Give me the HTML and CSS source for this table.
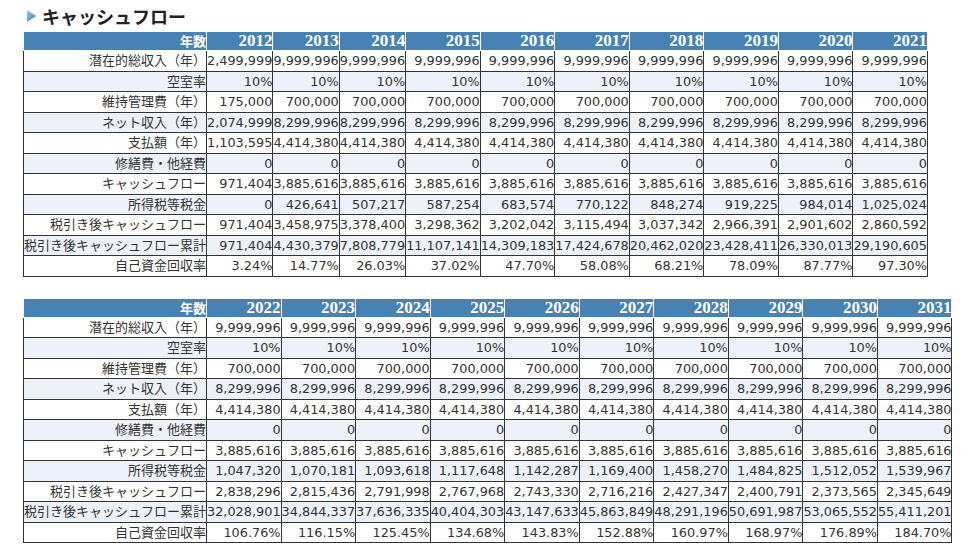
FILE: index.html
```html
<!DOCTYPE html>
<html lang="ja">
<head>
<meta charset="utf-8">
<title>キャッシュフロー</title>
<link rel="stylesheet" href="styles.css">
</head>
<body>
<div class="page">
  <h1 class="title">
    <svg class="title-icon" width="9" height="12" viewBox="0 0 9 12">
      <defs>
        <linearGradient id="tg" x1="0" y1="0" x2="1" y2="1">
          <stop offset="0" stop-color="#9fd3f3"/>
          <stop offset="1" stop-color="#1f74c0"/>
        </linearGradient>
      </defs>
      <polygon points="0,0 9,6 0,12" fill="url(#tg)"/>
    </svg>
    <span>キャッシュフロー</span>
  </h1>

  <table class="cf">
    <thead>
      <tr><th class="lbl">年数</th><th>2012</th><th>2013</th><th>2014</th><th>2015</th><th>2016</th><th>2017</th><th>2018</th><th>2019</th><th>2020</th><th>2021</th></tr>
    </thead>
    <tbody>
      <tr><td class="lbl">潜在的総収入（年）</td><td>2,499,999</td><td>9,999,996</td><td>9,999,996</td><td>9,999,996</td><td>9,999,996</td><td>9,999,996</td><td>9,999,996</td><td>9,999,996</td><td>9,999,996</td><td>9,999,996</td></tr>
      <tr><td class="lbl">空室率</td><td>10%</td><td>10%</td><td>10%</td><td>10%</td><td>10%</td><td>10%</td><td>10%</td><td>10%</td><td>10%</td><td>10%</td></tr>
      <tr><td class="lbl">維持管理費（年）</td><td>175,000</td><td>700,000</td><td>700,000</td><td>700,000</td><td>700,000</td><td>700,000</td><td>700,000</td><td>700,000</td><td>700,000</td><td>700,000</td></tr>
      <tr><td class="lbl">ネット収入（年）</td><td>2,074,999</td><td>8,299,996</td><td>8,299,996</td><td>8,299,996</td><td>8,299,996</td><td>8,299,996</td><td>8,299,996</td><td>8,299,996</td><td>8,299,996</td><td>8,299,996</td></tr>
      <tr><td class="lbl">支払額（年）</td><td>1,103,595</td><td>4,414,380</td><td>4,414,380</td><td>4,414,380</td><td>4,414,380</td><td>4,414,380</td><td>4,414,380</td><td>4,414,380</td><td>4,414,380</td><td>4,414,380</td></tr>
      <tr><td class="lbl">修繕費・他経費</td><td>0</td><td>0</td><td>0</td><td>0</td><td>0</td><td>0</td><td>0</td><td>0</td><td>0</td><td>0</td></tr>
      <tr><td class="lbl">キャッシュフロー</td><td>971,404</td><td>3,885,616</td><td>3,885,616</td><td>3,885,616</td><td>3,885,616</td><td>3,885,616</td><td>3,885,616</td><td>3,885,616</td><td>3,885,616</td><td>3,885,616</td></tr>
      <tr><td class="lbl">所得税等税金</td><td>0</td><td>426,641</td><td>507,217</td><td>587,254</td><td>683,574</td><td>770,122</td><td>848,274</td><td>919,225</td><td>984,014</td><td>1,025,024</td></tr>
      <tr><td class="lbl">税引き後キャッシュフロー</td><td>971,404</td><td>3,458,975</td><td>3,378,400</td><td>3,298,362</td><td>3,202,042</td><td>3,115,494</td><td>3,037,342</td><td>2,966,391</td><td>2,901,602</td><td>2,860,592</td></tr>
      <tr><td class="lbl">税引き後キャッシュフロー累計</td><td>971,404</td><td>4,430,379</td><td>7,808,779</td><td>11,107,141</td><td>14,309,183</td><td>17,424,678</td><td>20,462,020</td><td>23,428,411</td><td>26,330,013</td><td>29,190,605</td></tr>
      <tr><td class="lbl">自己資金回収率</td><td>3.24%</td><td>14.77%</td><td>26.03%</td><td>37.02%</td><td>47.70%</td><td>58.08%</td><td>68.21%</td><td>78.09%</td><td>87.77%</td><td>97.30%</td></tr>
    </tbody>
  </table>

  <table class="cf">
    <thead>
      <tr><th class="lbl">年数</th><th>2022</th><th>2023</th><th>2024</th><th>2025</th><th>2026</th><th>2027</th><th>2028</th><th>2029</th><th>2030</th><th>2031</th></tr>
    </thead>
    <tbody>
      <tr><td class="lbl">潜在的総収入（年）</td><td>9,999,996</td><td>9,999,996</td><td>9,999,996</td><td>9,999,996</td><td>9,999,996</td><td>9,999,996</td><td>9,999,996</td><td>9,999,996</td><td>9,999,996</td><td>9,999,996</td></tr>
      <tr><td class="lbl">空室率</td><td>10%</td><td>10%</td><td>10%</td><td>10%</td><td>10%</td><td>10%</td><td>10%</td><td>10%</td><td>10%</td><td>10%</td></tr>
      <tr><td class="lbl">維持管理費（年）</td><td>700,000</td><td>700,000</td><td>700,000</td><td>700,000</td><td>700,000</td><td>700,000</td><td>700,000</td><td>700,000</td><td>700,000</td><td>700,000</td></tr>
      <tr><td class="lbl">ネット収入（年）</td><td>8,299,996</td><td>8,299,996</td><td>8,299,996</td><td>8,299,996</td><td>8,299,996</td><td>8,299,996</td><td>8,299,996</td><td>8,299,996</td><td>8,299,996</td><td>8,299,996</td></tr>
      <tr><td class="lbl">支払額（年）</td><td>4,414,380</td><td>4,414,380</td><td>4,414,380</td><td>4,414,380</td><td>4,414,380</td><td>4,414,380</td><td>4,414,380</td><td>4,414,380</td><td>4,414,380</td><td>4,414,380</td></tr>
      <tr><td class="lbl">修繕費・他経費</td><td>0</td><td>0</td><td>0</td><td>0</td><td>0</td><td>0</td><td>0</td><td>0</td><td>0</td><td>0</td></tr>
      <tr><td class="lbl">キャッシュフロー</td><td>3,885,616</td><td>3,885,616</td><td>3,885,616</td><td>3,885,616</td><td>3,885,616</td><td>3,885,616</td><td>3,885,616</td><td>3,885,616</td><td>3,885,616</td><td>3,885,616</td></tr>
      <tr><td class="lbl">所得税等税金</td><td>1,047,320</td><td>1,070,181</td><td>1,093,618</td><td>1,117,648</td><td>1,142,287</td><td>1,169,400</td><td>1,458,270</td><td>1,484,825</td><td>1,512,052</td><td>1,539,967</td></tr>
      <tr><td class="lbl">税引き後キャッシュフロー</td><td>2,838,296</td><td>2,815,436</td><td>2,791,998</td><td>2,767,968</td><td>2,743,330</td><td>2,716,216</td><td>2,427,347</td><td>2,400,791</td><td>2,373,565</td><td>2,345,649</td></tr>
      <tr><td class="lbl">税引き後キャッシュフロー累計</td><td>32,028,901</td><td>34,844,337</td><td>37,636,335</td><td>40,404,303</td><td>43,147,633</td><td>45,863,849</td><td>48,291,196</td><td>50,691,987</td><td>53,065,552</td><td>55,411,201</td></tr>
      <tr><td class="lbl">自己資金回収率</td><td>106.76%</td><td>116.15%</td><td>125.45%</td><td>134.68%</td><td>143.83%</td><td>152.88%</td><td>160.97%</td><td>168.97%</td><td>176.89%</td><td>184.70%</td></tr>
    </tbody>
  </table>
</div>
</body>
</html>
```

FILE: styles.css
```css
html, body {
  margin: 0;
  padding: 0;
  background: #ffffff;
}

body {
  font-family: "DejaVu Sans", "Noto Sans CJK JP", sans-serif;
  color: #333333;
}

.page {
  padding: 0 0 0 23px;
}

.title {
  margin: 0;
  height: 31px;
  display: flex;
  align-items: center;
  gap: 6px;
  padding-left: 4px;
  font-family: "Noto Sans CJK JP", sans-serif;
  font-size: 18px;
  font-weight: bold;
  color: #222222;
  line-height: 1;
}

.title-icon {
  display: block;
  flex: none;
}

.cf {
  border-collapse: collapse;
  font-size: 12.85px;
  line-height: 19.5px;
}

.cf + .cf {
  margin-top: 21px;
}

.cf th {
  background: #4682b4;
  color: #ffffff;
  border: 1px solid #ffffff;
  padding: 0;
  text-align: right;
  font-family: "Liberation Serif", "Noto Sans CJK JP", serif;
  font-size: 17px;
  font-weight: bold;
  line-height: 18px;
  white-space: nowrap;
}

.cf th.lbl {
  font-family: "Noto Sans CJK JP", sans-serif;
  font-size: 13px;
  width: 182px;
}

.cf td {
  border: 1px solid #333333;
  padding: 0;
  text-align: right;
  white-space: nowrap;
}

.cf td.lbl {
  font-size: 13px;
}

.cf tbody tr:nth-child(even) td {
  background: #edf2fa;
}
```
